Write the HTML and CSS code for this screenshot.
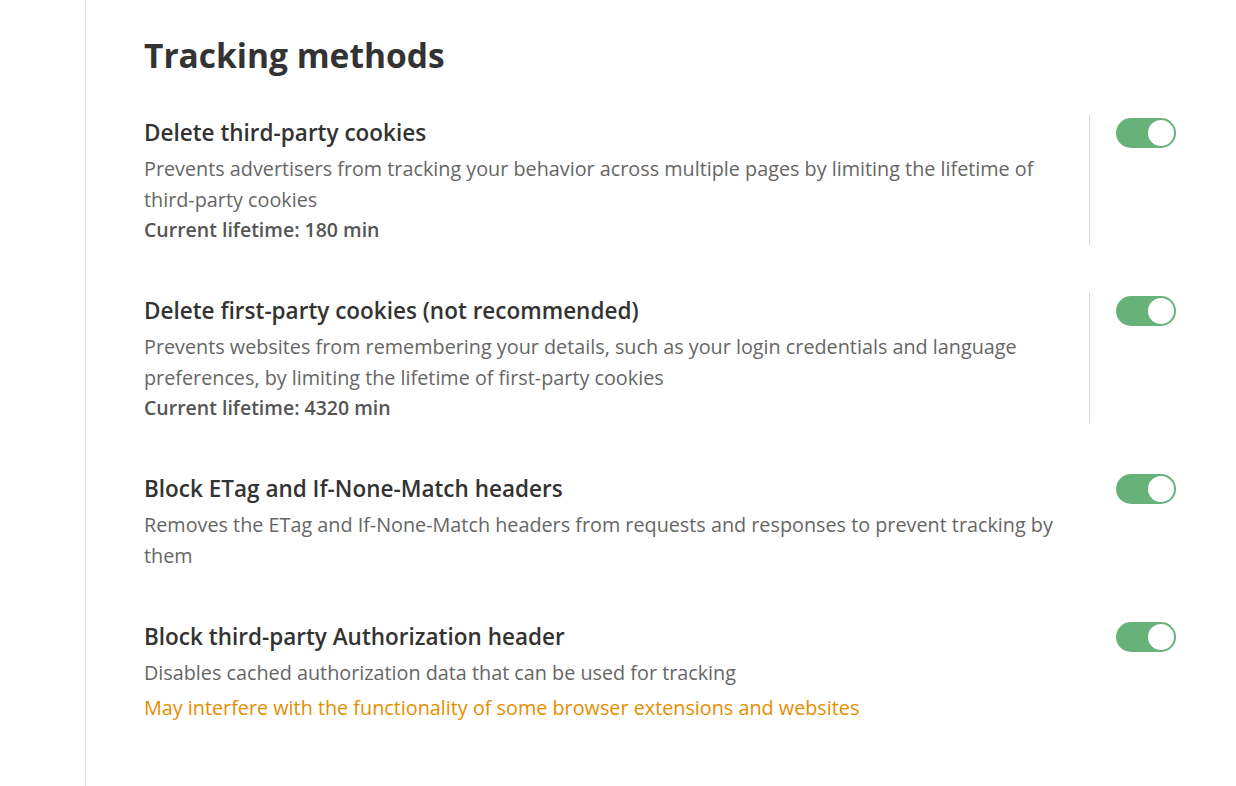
FILE: index.html
```html
<!DOCTYPE html>
<html>
<head>
<meta charset="utf-8">
<link rel="stylesheet" href="styles.css">
</head>
<body>
<div class="page">
  <div class="content">
    <h1 class="title">Tracking methods</h1>
    <div class="list">
      <div class="item">
        <div class="text">
          <div class="name">Delete third-party cookies</div>
          <div class="desc">Prevents advertisers from tracking your behavior across multiple pages by limiting the lifetime of third-party cookies</div>
          <div class="meta">Current lifetime: 180 min</div>
        </div>
        <div class="control divided"><span class="toggle"><span class="knob"></span></span></div>
      </div>
      <div class="item">
        <div class="text">
          <div class="name">Delete first-party cookies (not recommended)</div>
          <div class="desc">Prevents websites from remembering your details, such as your login credentials and language preferences, by limiting the lifetime of first-party cookies</div>
          <div class="meta">Current lifetime: 4320 min</div>
        </div>
        <div class="control divided"><span class="toggle"><span class="knob"></span></span></div>
      </div>
      <div class="item">
        <div class="text">
          <div class="name">Block ETag and If-None-Match headers</div>
          <div class="desc">Removes the ETag and If-None-Match headers from requests and responses to prevent tracking by them</div>
        </div>
        <div class="control"><span class="toggle"><span class="knob"></span></span></div>
      </div>
      <div class="item">
        <div class="text">
          <div class="name">Block third-party Authorization header</div>
          <div class="desc">Disables cached authorization data that can be used for tracking</div>
          <div class="warn">May interfere with the functionality of some browser extensions and websites</div>
        </div>
        <div class="control"><span class="toggle"><span class="knob"></span></span></div>
      </div>
    </div>
  </div>
</div>
</body>
</html>
```
FILE: styles.css
```css
html, body {
  margin: 0;
  padding: 0;
  background: #fff;
}
body {
  font-family: "Open Sans", "Noto Sans", sans-serif;
  color: #333;
}
.page {
  padding-left: 85px;
  min-height: 786px;
  box-sizing: border-box;
}
.content {
  border-left: 1px solid #dcdcdc;
  min-height: 786px;
  padding: 30px 60px 0 58px;
  box-sizing: border-box;
}
.title {
  margin: 0;
  font-size: 33.5px;
  font-weight: 700;
  line-height: 50px;
  color: #333;
}
.list {
  display: flex;
  flex-direction: column;
  gap: 48px;
  margin-top: 35px;
}
.item {
  display: flex;
  align-items: flex-start;
}
.text {
  flex: 1;
  padding-right: 26px;
}
.name {
  font-size: 22.5px;
  font-weight: 600;
  line-height: 36px;
  color: #333;
}
.desc {
  font-size: 19.8px;
  line-height: 31px;
  padding-top: 2px;
  color: #666;
}
.meta {
  font-size: 19.5px;
  font-weight: 600;
  line-height: 30px;
  color: #555;
}
.warn {
  font-size: 19.8px;
  line-height: 31px;
  padding-top: 4px;
  color: #e58e00;
}
.control {
  width: 60px;
  padding-left: 26px;
  border-left: 1px solid transparent;
  align-self: stretch;
}
.control.divided {
  border-left-color: #d6d6d6;
}
.toggle {
  display: flex;
  justify-content: flex-end;
  align-items: center;
  width: 60px;
  height: 30px;
  margin-top: 3px;
  border-radius: 15px;
  background: #67b279;
  padding: 2px;
  box-sizing: border-box;
}
.knob {
  width: 26px;
  height: 26px;
  border-radius: 50%;
  background: #fff;
}
```
